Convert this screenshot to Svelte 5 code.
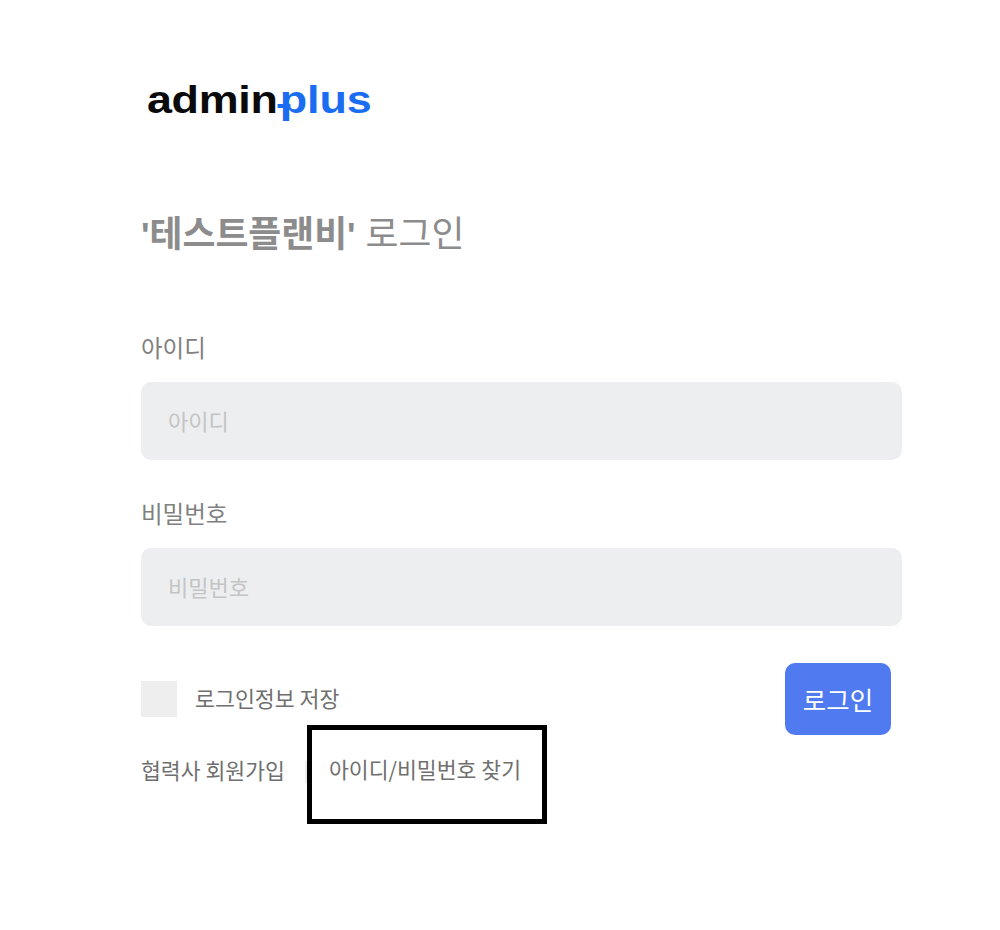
<script>
  let userId = $state("");
  let password = $state("");
  let remember = $state(false);
</script>

<div class="page">
  <div class="logo"><span class="logo-admin">admin</span><span class="logo-plus">plus</span></div>

  <h1 class="title"><b>'테스트플랜비'</b> 로그인</h1>

  <label class="field">
    <span class="label">아이디</span>
    <input type="text" placeholder="아이디" bind:value={userId} />
  </label>

  <label class="field second">
    <span class="label">비밀번호</span>
    <input type="password" placeholder="비밀번호" bind:value={password} />
  </label>

  <div class="actions">
    <label class="remember">
      <input type="checkbox" bind:checked={remember} />
      <span class="box"></span>
      <span class="remember-text">로그인정보 저장</span>
    </label>
    <button class="submit">로그인</button>
  </div>

  <div class="links">
    <a class="join" href="#join">협력사 회원가입</a>
    <span class="divider"></span>
    <a class="find" href="#find">아이디/비밀번호 찾기</a>
  </div>
</div>

<style>
  :global(body) {
    margin: 0;
    background: #fff;
    font-family: "Noto Sans CJK KR", "Noto Sans", sans-serif;
  }
  .page {
    width: 761px;
    height: 930px;
    padding-left: 141px;
    box-sizing: content-box;
    overflow: hidden;
  }
  .logo {
    margin-top: 76px;
    margin-left: 6px;
    height: 48px;
    display: flex;
    align-items: center;
    font-family: "Liberation Sans", sans-serif;
    font-weight: 700;
    font-size: 38.5px;
    line-height: 48px;
    white-space: nowrap;
    transform: scaleX(1.166);
    transform-origin: left center;
  }
  .logo-admin { color: #0a0a0a; letter-spacing: -0.3px; }
  .logo-plus {
    color: #1a6cf0;
    position: relative;
    margin-left: 2px;
    letter-spacing: -0.1px;
  }
  .logo-plus::before {
    content: "";
    position: absolute;
    left: -2px;
    top: 28px;
    width: 11px;
    height: 4px;
    background: #1a6cf0;
  }
  .title {
    margin: 85px 0 0;
    font-family: "Liberation Sans", "Noto Sans CJK KR", sans-serif;
    font-size: 35.8px;
    line-height: 52px;
    font-weight: 400;
    color: #8c8c8c;
  }
  .title b { font-weight: 700; }
  .field { display: block; margin-top: 69px; }
  .field.second { margin-top: 36px; }
  .label {
    display: block;
    font-size: 23.5px;
    line-height: 34px;
    color: #808080;
    margin-bottom: 18px;
  }
  .field input {
    display: block;
    width: 100%;
    height: 78px;
    box-sizing: border-box;
    padding: 0 27px 2px;
    border: 0;
    border-radius: 10px;
    background: #edeef0;
    font: inherit;
    font-size: 22px;
    color: #555;
    outline: none;
  }
  .field input::placeholder { color: #c4c4c4; opacity: 1; }
  .actions {
    margin-top: 37px;
    display: flex;
    align-items: center;
    justify-content: space-between;
    padding-right: 11px;
  }
  .remember {
    display: flex;
    align-items: center;
    gap: 18px;
    font-size: 21.7px;
    color: #6f6f6f;
  }
  .remember input { display: none; }
  .remember-text { padding-bottom: 4px; }
  .box {
    width: 36px;
    height: 36px;
    background: #eeeeee;
  }
  .submit {
    width: 106px;
    height: 72px;
    padding: 0 0 2px;
    border: 0;
    border-radius: 10px;
    background: #4f7af0;
    color: #fff;
    font: inherit;
    font-size: 25.5px;
  }
  .links {
    margin-top: -10px;
    display: flex;
    align-items: center;
    font-size: 21.6px;
  }
  .links a {
    color: #6f6f6f;
    text-decoration: none;
  }
  .join { padding-bottom: 10px; }
  .divider {
    width: 2px;
    height: 22px;
    margin: 0 0 6px 20px;
    background: #eeeeee;
  }
  .links a.find {
    box-sizing: border-box;
    width: 240px;
    height: 99px;
    padding: 23px 0 0 17px;
    border: 5px solid #000;
    line-height: 32px;
  }
</style>
